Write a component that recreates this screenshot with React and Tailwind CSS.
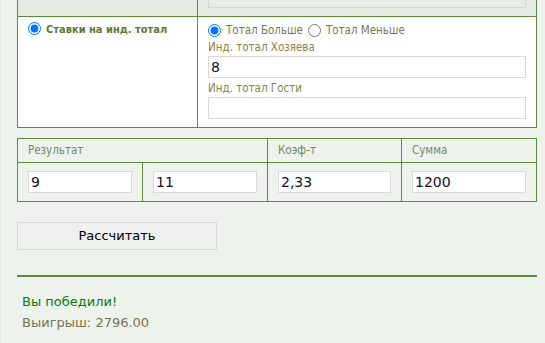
import React from 'react';

const font = "font-['DejaVu_Sans_Condensed','Liberation_Sans',sans-serif]";
const wide = "font-['DejaVu_Sans','Liberation_Sans',sans-serif]";

const Radio = ({ checked }) => (
    <input type="radio" readOnly checked={checked} className="w-[13px] h-[13px] shrink-0 accent-[#0075ff]" />
);

const Field = ({ value }) => (
    <input
        readOnly
        value={value}
        className={`${wide} block w-full h-[22px] bg-white border border-[#dadada] px-[2px] text-[14px] text-[#101020] outline-none`}
    />
);

export default function App() {
    return (
        <div className={`${font} min-h-[343px] bg-[#edf2ec] border-l border-[#dfe8dc] pl-[16px] pr-[8px]`}>
            {/* individual total table */}
            <div className="w-[520px] border-x border-b border-[#5e8a3c]">
                <div className="grid grid-cols-[180px_1fr] h-[17px] border-b border-[#5e8a3c] bg-[#e5eae3]">
                    <div className="border-r border-[#5e8a3c]"></div>
                    <div className="px-[10px]">
                        <div className="h-[8px] bg-[#e8ece6] border-x border-b border-[#d4d9d2]"></div>
                    </div>
                </div>
                <div className="grid grid-cols-[180px_1fr] h-[110px] bg-white">
                    <div className="border-r border-[#5e8a3c] pl-[10px] pt-[5px] flex items-start gap-[5px]">
                        <Radio checked />
                        <span className="text-[11px] font-bold text-[#5b7a35] leading-[13px] pt-[1px]">Ставки на инд. тотал</span>
                    </div>
                    <div className="px-[10px] pt-[7px]">
                        <div className="flex items-center h-[13px] text-[11.5px] text-[#77775a]">
                            <Radio checked />
                            <span className="ml-[5px] mr-[5px]">Тотал Больше</span>
                            <Radio />
                            <span className="ml-[5px]">Тотал Меньше</span>
                        </div>
                        <div className="text-[11.5px] text-[#858548] mt-[3px] h-[14px] leading-[14px]">Инд. тотал Хозяева</div>
                        <div className="mt-[2px]"><Field value="8" /></div>
                        <div className="text-[11.5px] text-[#858548] mt-[3px] h-[14px] leading-[14px]">Инд. тотал Гости</div>
                        <div className="mt-[2px]"><Field value="" /></div>
                    </div>
                </div>
            </div>

            {/* result table */}
            <div className="w-[520px] mt-[10px] border border-[#5e8a3c] text-[11.5px] text-[#6d8b62]">
                <div className="grid grid-cols-[250px_134px_1fr] h-[24px] border-b border-[#5e8a3c]">
                    <div className="border-r border-[#5e8a3c] pl-[10px] pt-[1px] flex items-center">Результат</div>
                    <div className="border-r border-[#5e8a3c] pl-[10px] pt-[1px] flex items-center">Коэф-т</div>
                    <div className="pl-[10px] pt-[1px] flex items-center">Сумма</div>
                </div>
                <div className="grid grid-cols-[125px_125px_134px_1fr] h-[38px]">
                    <div className="border-r border-[#5e8a3c] px-[10px] py-[8px]"><Field value="9" /></div>
                    <div className="border-r border-[#5e8a3c] px-[10px] py-[8px]"><Field value="11" /></div>
                    <div className="border-r border-[#5e8a3c] px-[10px] py-[8px]"><Field value="2,33" /></div>
                    <div className="px-[10px] py-[8px]"><Field value="1200" /></div>
                </div>
            </div>

            <button className={`${wide} mt-[20px] w-[200px] h-[28px] bg-[#efefef] border border-[#d9d9d9] text-[13px] text-black`}>
                Рассчитать
            </button>

            <div className="mt-[25px] w-[520px] h-[2px] bg-[#5e8a3c]"></div>

            <div className={`${wide} pl-[5px] pt-[14px] text-[13px] leading-[21px]`}>
                <p className="text-[#0a7a0a]">Вы победили!</p>
                <p className="text-[#76764e]">Выигрыш: 2796.00</p>
            </div>
        </div>
    );
}
